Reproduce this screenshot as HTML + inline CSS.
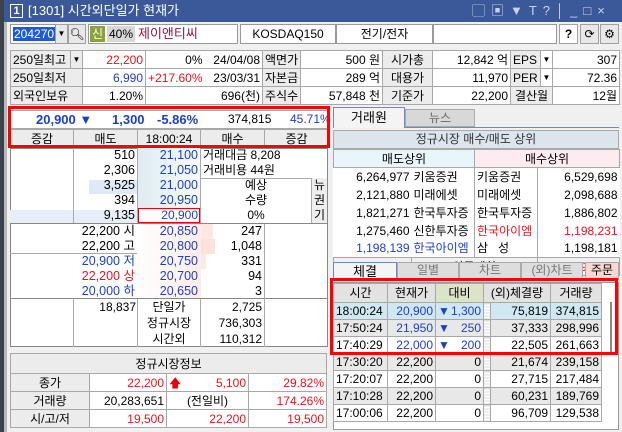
<!DOCTYPE html>
<html><head><meta charset="utf-8"><style>
*{box-sizing:border-box;margin:0;padding:0}
body{width:622px;height:432px;overflow:hidden;background:#f0f0f0;font-family:"Liberation Sans","Noto Sans CJK KR","NanumGothic",sans-serif;font-size:12px;color:#000;position:relative}
.a{position:absolute}
table{border-collapse:collapse;position:absolute;table-layout:fixed}
td{border:1px solid #a8a8a8;white-space:nowrap;overflow:hidden;padding:0 2px;height:18px;line-height:16px}
.r{text-align:right}.c{text-align:center}
.red{color:#e8141e}.blu{color:#1c3fc8}
.lab{background:#ececec}
.btn{background:#e8e8e8;border:1px solid #a0a0a0}
.tt td{height:17px;line-height:15px}
</style></head><body>
<div class="a" style="left:0;top:0;width:4px;height:432px;background:#3c434c"></div>
<div class="a" style="left:4px;top:22px;width:3px;height:410px;background:#b8b8b8"></div>
<div class="a" style="left:4px;top:0;width:618px;height:22px;background:#3b5998"></div>
<div class="a" style="left:10px;top:4px;width:13px;height:14px;border:1px solid #fff;color:#fff;font-size:11px;font-weight:bold;text-align:center;line-height:12px">1</div>
<div class="a" style="left:28px;top:2px;color:#fff;font-size:13px;line-height:18px">[1301] 시간외단일가 현재가</div>
<div class="a" style="left:472px;top:2px;color:#c8d4ee;font-size:13px;letter-spacing:6px;line-height:18px">▢▣▼T?│_□×</div>
<div class="a" style="left:10px;top:24px;width:46px;height:20px;background:#fff;border:1px solid #999"></div>
<div class="a" style="left:13px;top:27px;background:#1c5cd0;color:#fff;line-height:14px;padding:0 1px">204270</div>
<div class="a btn" style="left:55px;top:24px;width:13px;height:20px;font-size:8px;text-align:center;line-height:18px">▼</div>
<div class="a btn" style="left:68px;top:24px;width:18px;height:20px;text-align:center;line-height:18px">🔍︎</div>
<div class="a" style="left:88px;top:24px;width:150px;height:20px;background:#fff;border:1px solid #999"></div>
<div class="a" style="left:90px;top:26px;width:15px;height:16px;background:#8ca03c;color:#fff;text-align:center;line-height:16px">신</div>
<div class="a" style="left:107px;top:26px;width:28px;height:16px;background:#d8d8d8;text-align:center;line-height:16px">40%</div>
<div class="a" style="left:138px;top:26px;color:#8a1840;line-height:16px;font-size:13px">제이앤티씨</div>
<div class="a" style="left:240px;top:24px;width:96px;height:20px;background:#fff;border:1px solid #999;text-align:center;line-height:18px">KOSDAQ150</div>
<div class="a" style="left:336px;top:24px;width:97px;height:20px;background:#fff;border:1px solid #999;text-align:center;line-height:18px">전기/전자</div>
<div class="a" style="left:433px;top:24px;width:124px;height:20px;background:#fff;border:1px solid #999"></div>
<div class="a btn" style="left:559px;top:24px;width:19px;height:20px;text-align:center;font-weight:bold;line-height:18px;background:#fff">?</div>
<div class="a btn" style="left:580px;top:24px;width:19px;height:20px;text-align:center;line-height:18px">⟳</div>
<div class="a btn" style="left:600px;top:24px;width:19px;height:20px;text-align:center;line-height:18px">⚙</div>
<table style="left:10px;top:50px;width:609px;background:#fff">
<col style="width:60px"><col style="width:12px"><col style="width:63px"><col style="width:59px"><col style="width:58px"><col style="width:38px"><col style="width:82px"><col style="width:50px"><col style="width:78px"><col style="width:30px"><col style="width:12px"><col style="width:67px">
<tr><td class="lab">250일최고</td><td class="lab c" style="font-size:8px;padding:0">▼</td><td class="r red">22,200</td><td class="r" style="border-right:0">0%</td><td class="r" style="border-left:0">24/04/08</td><td class="lab">액면가</td><td class="r">500 원</td><td class="lab c">시가총</td><td class="r">12,842 억</td><td class="lab">EPS</td><td class="c" style="font-size:8px;padding:0">▼</td><td class="r">307</td></tr>
<tr><td class="lab" colspan="2">250일최저</td><td class="r blu">6,990</td><td class="r red" style="border-right:0">+217.60%</td><td class="r" style="border-left:0">23/03/31</td><td class="lab">자본금</td><td class="r">289 억</td><td class="lab c">대용가</td><td class="r">11,970</td><td class="lab">PER</td><td class="c" style="font-size:8px;padding:0">▼</td><td class="r">72.36</td></tr>
<tr><td class="lab" colspan="2">외국인보유</td><td class="r">1.20%</td><td class="r" colspan="2">696(천)</td><td class="lab">주식수</td><td class="r">57,848 천</td><td class="lab c">기준가</td><td class="r">22,200</td><td class="lab c" colspan="2">결산월</td><td class="r">12월</td></tr>
</table>
<div class="a" style="left:10px;top:110px;width:318px;height:19px;background:#fff;border:1px solid #a8a8a8"></div>
<div class="a blu" style="left:36px;top:111px;font-weight:bold;font-size:13px;line-height:17px">20,900 ▼</div>
<div class="a blu" style="left:112px;top:111px;font-weight:bold;font-size:13px;line-height:17px">1,300</div>
<div class="a blu" style="left:157px;top:111px;font-weight:bold;font-size:13px;line-height:17px">-5.86%</div>
<div class="a" style="left:228px;top:111px;line-height:17px">374,815</div>
<div class="a blu" style="left:290px;top:111px;line-height:17px">45.71%</div>
<table style="left:10px;top:129px;width:318px">
<col style="width:63px"><col style="width:64px"><col style="width:63px"><col style="width:64px"><col style="width:64px">
<tr><td class="lab c" style="height:17px">증감</td><td class="lab c">매도</td><td class="lab c">18:00:24</td><td class="lab c">매수</td><td class="lab c">증감</td></tr>
</table>
<div class="a" style="left:8px;top:106px;width:322px;height:42px;border:3px solid #f00"></div>
<div class="a" style="left:10px;top:148px;width:318px;height:199px;background:#fff;border:1px solid #888"></div>
<div class="a" style="left:137px;top:148px;width:64px;height:75px;background:linear-gradient(90deg,#dfecf2,#f6fafc)"></div>
<div class="a" style="left:89px;top:180px;width:48px;height:14px;background:#dfe9f8"></div>
<div class="a" style="left:10px;top:210px;width:127px;height:13px;background:#e6eef8"></div>
<div class="a" style="left:73px;top:148px;width:1px;height:75px;background:#aaa"></div>
<div class="a" style="left:137px;top:148px;width:1px;height:199px;background:#aaa"></div>
<div class="a" style="left:200px;top:148px;width:1px;height:199px;background:#aaa"></div>
<div class="a" style="left:10px;top:223px;width:318px;height:1px;background:#888"></div>
<div class="a r" style="left:74px;top:148px;width:61px;line-height:15px;font-size:12.5px">510<br>2,306<br>3,525<br>394<br>9,135</div>
<div class="a r blu" style="left:138px;top:148px;width:60px;line-height:15px;font-size:12.5px">21,100<br>21,050<br>21,000<br>20,950</div>
<div class="a r blu" style="left:138px;top:208px;width:62px;height:15px;border:1px solid #e00;line-height:13px;padding-right:1px;background:#fff">20,900</div>
<div class="a" style="left:203px;top:148px;line-height:15px">거래대금 8,208<br>거래비용 44원</div>
<div class="a" style="left:201px;top:178px;width:110px;height:1px;background:#aaa"></div>
<div class="a c" style="left:201px;top:178px;width:110px;line-height:15px">예상<br>수량<br>0%</div>
<div class="a" style="left:311px;top:178px;width:16px;height:45px;background:#eee;border-left:1px solid #aaa;line-height:15px;text-align:center">뉴<br>권<br>기</div>
<div class="a" style="left:201px;top:224px;width:12px;height:15px;background:#fde8e2"></div>
<div class="a" style="left:201px;top:239px;width:14px;height:15px;background:#fde2da"></div>
<div class="a" style="left:201px;top:254px;width:5px;height:15px;background:#fde8e2"></div>
<div class="a" style="left:137px;top:224px;width:64px;height:74px;background:linear-gradient(90deg,#fff,#fdece8)"></div>
<div class="a" style="left:264px;top:224px;width:1px;height:74px;background:#aaa"></div>
<div class="a" style="left:10px;top:253px;width:127px;height:1px;background:#aaa"></div>
<div class="a r" style="left:11px;top:224px;width:126px;line-height:15px;font-size:12.5px;padding-right:2px">22,200 시<br>22,200 고<br><span class="blu">20,900 저</span><br><span class="red">22,200 상</span><br><span class="blu">20,000 하</span></div>
<div class="a r blu" style="left:138px;top:224px;width:60px;line-height:15px;font-size:12.5px">20,850<br>20,800<br>20,750<br>20,700<br>20,650</div>
<div class="a r" style="left:201px;top:224px;width:61px;line-height:15px;font-size:12.5px">247<br>1,048<br>331<br>94<br>3</div>
<div class="a" style="left:10px;top:298px;width:318px;height:1px;background:#888"></div>
<div class="a" style="left:73px;top:298px;width:1px;height:49px;background:#aaa"></div>
<div class="a" style="left:264px;top:298px;width:1px;height:49px;background:#aaa"></div>
<div class="a r" style="left:74px;top:299px;width:62px;line-height:16px">18,837</div>
<div class="a c" style="left:138px;top:299px;width:62px;line-height:16px">단일가<br>정규시장<br>시간외</div>
<div class="a r" style="left:201px;top:299px;width:61px;line-height:16px">2,725<br>736,303<br>110,312</div>
<table style="left:10px;top:353px;width:316px;background:#fff">
<col style="width:79px"><col style="width:77px"><col style="width:82px"><col style="width:78px">
<tr><td class="lab c" colspan="4" style="height:20px">정규시장정보</td></tr>
<tr><td class="lab c">종가</td><td class="r red">22,200</td><td class="r red"><span style="float:left;color:#e00">🡅</span>5,100</td><td class="r red">29.82%</td></tr>
<tr><td class="lab c">거래량</td><td class="r">20,283,651</td><td class="c">(전일비)</td><td class="r red">174.26%</td></tr>
<tr><td class="lab c">시/고/저</td><td class="r red">19,500</td><td class="r red">22,200</td><td class="r red">19,500</td></tr>
</table>
<div class="a c" style="left:333px;top:107px;width:72px;height:21px;background:#f4f4f4;border:1px solid #6a8ac8;border-bottom:0;font-size:13px;line-height:20px">거래원</div>
<div class="a c" style="left:405px;top:109px;width:70px;height:18px;background:#d8d8d8;border:1px solid #aaa;color:#666;line-height:16px">뉴스</div>
<div class="a" style="left:405px;top:127px;width:214px;height:1px;background:#6a8ac8"></div>
<div class="a c" style="left:333px;top:130px;width:286px;height:19px;background:#dce4ec;border:1px solid #aaa;line-height:17px;color:#333">정규시장 매수/매도 상위</div>
<table style="left:333px;top:149px;width:286px;background:#fff">
<col style="width:78px"><col style="width:63px"><col style="width:63px"><col style="width:82px">
<tr><td class="c" colspan="2" style="background:#e8f6fc">매도상위</td><td class="c" colspan="2" style="background:#fcecf0">매수상위</td></tr>
<tr><td class="r" style="border:0;height:16px">6,264,977</td><td style="border:0">키움증권</td><td style="border-top:0;border-bottom:0">키움증권</td><td class="r" style="border:0">6,529,698</td></tr>
<tr><td class="r" style="border:0;height:16px">2,121,880</td><td style="border:0">미래에셋</td><td style="border-top:0;border-bottom:0">미래에셋</td><td class="r" style="border:0">2,098,688</td></tr>
<tr><td class="r" style="border:0;height:16px">1,821,271</td><td style="border:0">한국투자증</td><td style="border-top:0;border-bottom:0">한국투자증</td><td class="r" style="border:0">1,886,802</td></tr>
<tr><td class="r" style="border:0;height:16px">1,275,460</td><td style="border:0">신한투자증</td><td class="red" style="border-top:0;border-bottom:0">한국아이엠</td><td class="r red" style="border:0">1,198,231</td></tr>
<tr><td class="r blu" style="border:0;height:16px">1,198,139</td><td class="blu" style="border:0">한국아이엠</td><td style="border-top:0;border-bottom:0">삼&nbsp;&nbsp;&nbsp;성</td><td class="r" style="border:0">1,198,181</td></tr>
<tr><td class="r blu" style="background:#f0f0f0;height:16px">1,198,139</td><td class="c" colspan="2" style="background:#f0f0f0">외국계합</td><td class="r red" style="background:#f0f0f0">1,198,231</td></tr>
</table>
<div class="a c" style="left:333px;top:262px;width:64px;height:18px;background:#f4f4f4;border:1px solid #6a8ac8;border-bottom:0;font-size:13px;line-height:17px">체결</div>
<div class="a c" style="left:397px;top:262px;width:62px;height:17px;background:#ddd;border:1px solid #aaa;color:#777;line-height:15px">일별</div>
<div class="a c" style="left:459px;top:262px;width:62px;height:17px;background:#ddd;border:1px solid #aaa;color:#777;line-height:15px">차트</div>
<div class="a c" style="left:521px;top:262px;width:62px;height:17px;background:#ddd;border:1px solid #aaa;color:#777;line-height:15px">(외)차트</div>
<div class="a c" style="left:585px;top:262px;width:34px;height:17px;background:#f8d8d0;border:1px solid #aaa;line-height:15px">주문</div>
<div class="a" style="left:397px;top:279px;width:222px;height:1px;background:#6a8ac8"></div>
<div class="a" style="left:333px;top:282px;width:286px;height:148px;background:#fff;border:1px solid #999"></div>
<table class="tt" style="left:333px;top:283px;width:268px">
<col style="width:54px"><col style="width:48px"><col style="width:48px"><col style="width:7px"><col style="width:60px"><col style="width:51px">
<tr style="background:#e2e2e2"><td class="c" style="height:19px">시간</td><td class="c">현재가</td><td class="c" style="background:#dce4c8">대비</td><td class="c" colspan="2">(외)체결량</td><td class="c">거래량</td></tr>
<tr style="background:#cfe8f2"><td>18:00:24</td><td class="r blu">20,900</td><td class="r blu"><span style="float:left">▼</span>1,300</td><td style="background:repeating-linear-gradient(#ddd 0 1px,#fff 1px 3px)"></td><td class="r">75,819</td><td class="r">374,815</td></tr>
<tr style="background:#e8e8e8"><td>17:50:24</td><td class="r blu">21,950</td><td class="r blu"><span style="float:left">▼</span>250</td><td style="background:repeating-linear-gradient(#ddd 0 1px,#fff 1px 3px)"></td><td class="r">37,333</td><td class="r">298,996</td></tr>
<tr style="background:#fff"><td>17:40:29</td><td class="r blu">22,000</td><td class="r blu"><span style="float:left">▼</span>200</td><td style="background:repeating-linear-gradient(#ddd 0 1px,#fff 1px 3px)"></td><td class="r">22,505</td><td class="r">261,663</td></tr>
<tr style="background:#e8e8e8"><td>17:30:20</td><td class="r">22,200</td><td class="r">0</td><td style="background:repeating-linear-gradient(#ddd 0 1px,#fff 1px 3px)"></td><td class="r">21,674</td><td class="r">239,158</td></tr>
<tr style="background:#fff"><td>17:20:07</td><td class="r">22,200</td><td class="r">0</td><td style="background:repeating-linear-gradient(#ddd 0 1px,#fff 1px 3px)"></td><td class="r">27,715</td><td class="r">217,484</td></tr>
<tr style="background:#e8e8e8"><td>17:10:28</td><td class="r">22,200</td><td class="r">0</td><td style="background:repeating-linear-gradient(#ddd 0 1px,#fff 1px 3px)"></td><td class="r">60,231</td><td class="r">189,769</td></tr>
<tr style="background:#fff"><td>17:00:06</td><td class="r">22,200</td><td class="r">0</td><td style="background:repeating-linear-gradient(#ddd 0 1px,#fff 1px 3px)"></td><td class="r">96,709</td><td class="r">129,538</td></tr>
</table>
<div class="a" style="left:610px;top:302px;width:2px;height:50px;background:#888"></div>
<div class="a" style="left:330px;top:278px;width:288px;height:77px;border:3px solid #f00"></div>
</body></html>
